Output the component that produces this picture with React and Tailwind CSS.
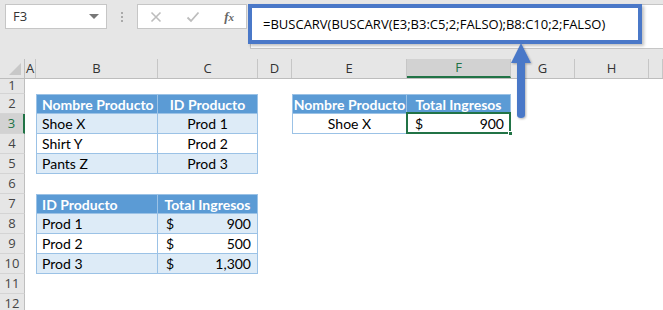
import React from "react"

const cols = ["A", "B", "C", "D", "E", "F", "G", "H", ""]
const widths = ["w-[11px]", "w-[122px]", "w-[100px]", "w-[34px]", "w-[115px]", "w-[104px]", "w-[64px]", "w-[74px]", "flex-1"]

const cellFont = { fontFamily: "Lato, 'Liberation Sans', sans-serif" }

const tb = "border-r border-b border-[#9bc2e6]"

// one sheet row: number label and the cells, in column order A..I
const Row = ({ n, h = "h-[20px]", active, children }) => (
  <div className={`flex ${h}`}>
    <div
      className={`w-[25px] shrink-0 flex items-center justify-center text-[13px] border-b border-[#d4d4d4] ${
        active ? "bg-[#d2d2d2] border-r-2 border-r-[#217346] text-[#217346]" : "bg-[#e6e6e6] border-r border-r-[#bfbfbf] text-[#444]"
      }`}
      style={{ fontFamily: "'Open Sans', 'Liberation Sans', sans-serif" }}
    >
      {n}
    </div>
    {children}
  </div>
)

const Blank = ({ w }) => <div className={`${w} shrink-0 bg-white`}></div>

const Head = ({ w, left, first, children }) => (
  <div
    className={`${w} shrink-0 bg-[#5b9bd5] text-white font-bold text-[14px] flex items-center border-t ${tb} ${first ? "border-l" : ""} ${
      left ? "justify-start pl-[5px]" : "justify-center"
    }`}
    style={cellFont}
  >
    {children}
  </div>
)

const Cell = ({ w, shade, align = "left", first, children }) => (
  <div
    className={`${w} shrink-0 text-[14px] text-black flex items-center ${tb} ${first ? "border-l" : ""} ${
      shade ? "bg-[#ddebf7]" : "bg-white"
    } ${align === "center" ? "justify-center" : "justify-start pl-[5px]"}`}
    style={cellFont}
  >
    {children}
  </div>
)

const Money = ({ w, shade, value, first, selected }) => (
  <div
    className={`${w} shrink-0 relative text-[14px] text-black flex items-center justify-between pl-[8px] pr-[6px] ${tb} ${
      first ? "border-l" : ""
    } ${shade ? "bg-[#ddebf7]" : "bg-white"}`}
    style={cellFont}
  >
    <span>$</span>
    <span>{value}</span>
    {selected && (
      <>
        <div className="absolute -left-[1px] -top-[2px] -right-[1px] -bottom-[1px] border-2 border-[#217346]"></div>
        <div className="absolute -right-[3px] -bottom-[3px] w-[5px] h-[5px] bg-[#217346] border border-white"></div>
      </>
    )}
  </div>
)

export default function App() {
  return (
    <div className="relative w-[663px] h-[310px] overflow-hidden bg-[#e6e6e6]">
      {/* formula bar area */}
      <div className="h-[59px] flex items-start pt-[4px] pl-[5px]">
        <div className="w-[102px] h-[25px] bg-white border border-[#c6c6c6] flex items-center justify-between pl-[7px] pr-[7px]">
          <span className="text-[13px] text-[#333]" style={{ fontFamily: "'Open Sans', 'Liberation Sans', sans-serif" }}>
            F3
          </span>
          <span className="w-0 h-0 border-l-[5px] border-r-[5px] border-t-[5px] border-l-transparent border-r-transparent border-t-[#777]"></span>
        </div>
        <div className="w-[30px] h-[25px] flex flex-col items-center justify-center gap-[2px]">
          <span className="w-[2px] h-[2px] bg-[#aaa]"></span>
          <span className="w-[2px] h-[2px] bg-[#aaa]"></span>
          <span className="w-[2px] h-[2px] bg-[#aaa]"></span>
        </div>
        <div className="w-[110px] h-[25px] bg-white border border-[#c6c6c6] flex items-center justify-between px-[12px]">
          <svg width="12" height="12" viewBox="0 0 12 12">
            <path d="M1.5 1.5 L10.5 10.5 M10.5 1.5 L1.5 10.5" stroke="#bdbdbd" strokeWidth="1.6" fill="none" />
          </svg>
          <svg width="14" height="12" viewBox="0 0 14 12">
            <path d="M1.5 6.5 L5 10 L12.5 1.5" stroke="#bdbdbd" strokeWidth="1.8" fill="none" />
          </svg>
          <span className="text-[13px] italic text-[#666] font-semibold" style={{ fontFamily: "'Liberation Serif', serif" }}>
            f<span className="text-[11px]">x</span>
          </span>
        </div>
        <div className="ml-[3px] flex-1 h-[45px] bg-white border border-[#c6c6c6] border-r-0"></div>
      </div>

      {/* formula, highlighted */}
      <div className="absolute left-[248px] top-[4px] w-[394px] h-[40px] border-[4px] border-[#4a78c8] bg-white shadow-[2px_2px_3px_rgba(0,0,0,0.25)] pl-[11px] pt-[3px]">
        <span className="text-[13px] text-black whitespace-nowrap" style={{ fontFamily: "'Open Sans', 'Liberation Sans', sans-serif" }}>
          =BUSCARV(BUSCARV(E3;B3:C5;2;FALSO);B8:C10;2;FALSO)
        </span>
      </div>

      {/* column headers */}
      <div className="flex h-[20px] border-b border-[#bdbdbd]" style={{ fontFamily: "'Open Sans', 'Liberation Sans', sans-serif" }}>
        <div className="w-[25px] shrink-0 flex items-end justify-end pr-[3px] pb-[3px] border-r border-[#bfbfbf]">
          <svg width="12" height="12" viewBox="0 0 12 12">
            <path d="M12 0 L12 12 L0 12 Z" fill="#c8c8c8" />
          </svg>
        </div>
        {cols.map((c, i) => (
          <div
            key={i}
            className={`${widths[i]} shrink-0 flex items-center justify-center text-[13px] border-r border-[#c6c6c6] ${
              c === "F" ? "bg-[#d2d2d2] text-[#217346] border-b-2 border-b-[#217346]" : "text-[#333]"
            }`}
          >
            {c}
          </div>
        ))}
      </div>

      {/* sheet */}
      <div className="bg-white">
        <Row n={1} h="h-[15px]">
          {widths.map((w, i) => <Blank key={i} w={w} />)}
        </Row>
        <Row n={2}>
          <Blank w={widths[0]} />
          <Head w={widths[1]} left first>Nombre Producto</Head>
          <Head w={widths[2]}>ID Producto</Head>
          <Blank w={widths[3]} />
          <Head w={widths[4]} first>Nombre Producto</Head>
          <Head w={widths[5]}>Total Ingresos</Head>
          <Blank w={widths[6]} />
          <Blank w={widths[7]} />
          <Blank w={widths[8]} />
        </Row>
        <Row n={3} active>
          <Blank w={widths[0]} />
          <Cell w={widths[1]} shade first>Shoe X</Cell>
          <Cell w={widths[2]} shade align="center">Prod 1</Cell>
          <Blank w={widths[3]} />
          <Cell w={widths[4]} first align="center">Shoe X</Cell>
          <Money w={widths[5]} value="900" selected />
          <Blank w={widths[6]} />
          <Blank w={widths[7]} />
          <Blank w={widths[8]} />
        </Row>
        <Row n={4}>
          <Blank w={widths[0]} />
          <Cell w={widths[1]} first>Shirt Y</Cell>
          <Cell w={widths[2]} align="center">Prod 2</Cell>
          {widths.slice(3).map((w, i) => <Blank key={i} w={w} />)}
        </Row>
        <Row n={5}>
          <Blank w={widths[0]} />
          <Cell w={widths[1]} shade first>Pants Z</Cell>
          <Cell w={widths[2]} shade align="center">Prod 3</Cell>
          {widths.slice(3).map((w, i) => <Blank key={i} w={w} />)}
        </Row>
        <Row n={6}>
          {widths.map((w, i) => <Blank key={i} w={w} />)}
        </Row>
        <Row n={7}>
          <Blank w={widths[0]} />
          <Head w={widths[1]} left first>ID Producto</Head>
          <Head w={widths[2]}>Total Ingresos</Head>
          {widths.slice(3).map((w, i) => <Blank key={i} w={w} />)}
        </Row>
        {[
          ["Prod 1", "900", true],
          ["Prod 2", "500", false],
          ["Prod 3", "1,300", true],
        ].map(([p, v, s], i) => (
          <Row key={p} n={8 + i}>
            <Blank w={widths[0]} />
            <Cell w={widths[1]} shade={s} first>{p}</Cell>
            <Money w={widths[2]} shade={s} value={v} />
            {widths.slice(3).map((w, j) => <Blank key={j} w={w} />)}
          </Row>
        ))}
        <Row n={11}>
          {widths.map((w, i) => <Blank key={i} w={w} />)}
        </Row>
        <Row n={12}>
          {widths.map((w, i) => <Blank key={i} w={w} />)}
        </Row>
      </div>

      {/* arrow pointing at the formula */}
      <svg className="absolute left-[506px] top-[40px]" width="32" height="82" viewBox="0 0 32 82">
        <defs>
          <filter id="sh" x="-50%" y="-20%" width="200%" height="140%">
            <feDropShadow dx="1" dy="1" stdDeviation="1.2" floodColor="#000" floodOpacity="0.3" />
          </filter>
        </defs>
        <g filter="url(#sh)">
          <path d="M15 3 L25 23 L19 23 L19 75 Q19 78 15 78 Q11 78 11 75 L11 23 L5 23 Z" fill="#4a78c8" />
        </g>
      </svg>
    </div>
  )
}
